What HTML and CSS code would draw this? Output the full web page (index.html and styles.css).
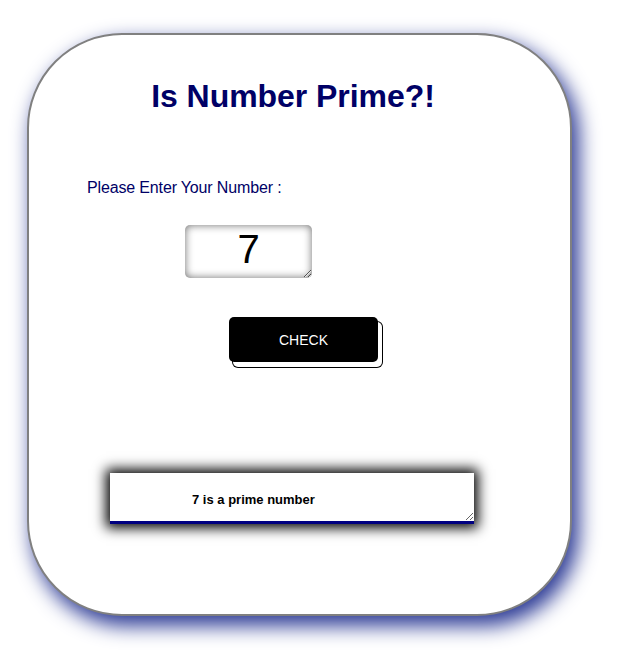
FILE: index.html
```html
<!DOCTYPE html>
<html>
<head>
<meta charset="utf-8">
<link rel="stylesheet" href="styles.css">
</head>
<body>
<div class="card">
  <h1 class="title">Is Number Prime?!</h1>
  <label class="label" for="num">Please Enter Your Number :</label>
  <textarea id="num" class="num">7</textarea>
  <button class="check">CHECK</button>
  <textarea class="result" readonly>7 is a prime number</textarea>
</div>
</body>
</html>
```
FILE: styles.css
```css
html, body {
  margin: 0;
  padding: 0;
  background: #fff;
}
body {
  box-sizing: border-box;
  min-height: 667px;
  padding: 33px 0 40px 27px;
  font-family: "Liberation Sans", Arial, sans-serif;
}
.card {
  box-sizing: border-box;
  width: 545px;
  height: 583px;
  border: 2px solid #808080;
  border-radius: 95px;
  background: #fff;
  box-shadow: 6px 9px 20px 1px #2e3c96;
  display: flex;
  flex-direction: column;
  align-items: flex-start;
  padding-top: 43px;
}
.title {
  margin: 0;
  align-self: stretch;
  text-align: center;
  padding-right: 13px;
  font-size: 32px;
  line-height: 37px;
  font-weight: bold;
  color: #000066;
  letter-spacing: -0.05px;
}
.label {
  margin: 64px 0 0 58px;
  font-size: 16px;
  line-height: 18px;
  color: #000066;
  letter-spacing: -0.15px;
}
.num {
  box-sizing: border-box;
  margin: 28px 0 0 156px;
  width: 127px;
  height: 53px;
  border: none;
  border-radius: 5px;
  box-shadow: inset 0 0 9px #6e6e6e;
  font-family: "Liberation Sans", Arial, sans-serif;
  font-size: 40px;
  line-height: 46px;
  text-align: center;
  padding: 1px 0 0;
  color: #000;
  overflow: hidden;
  outline: none;
}
.check {
  margin: 39px 0 0 200px;
  width: 149px;
  height: 45px;
  border: none;
  border-radius: 5px;
  background: #000;
  color: #fff;
  font-family: "Liberation Sans", Arial, sans-serif;
  font-size: 14px;
  box-shadow: 4px 5px 0 0 #fff, 4px 5px 0 1px #000;
}
.result {
  box-sizing: border-box;
  margin: 111px 0 0 81px;
  width: 364px;
  height: 51px;
  border: none;
  border-bottom: 3px solid #000080;
  background: #fff;
  box-shadow: 0 0 12px 4px #000;
  font-family: "Liberation Sans", Arial, sans-serif;
  font-size: 13px;
  font-weight: bold;
  color: #000;
  padding: 19px 0 0 82px;
  line-height: 15px;
  overflow: hidden;
  outline: none;
}
```
